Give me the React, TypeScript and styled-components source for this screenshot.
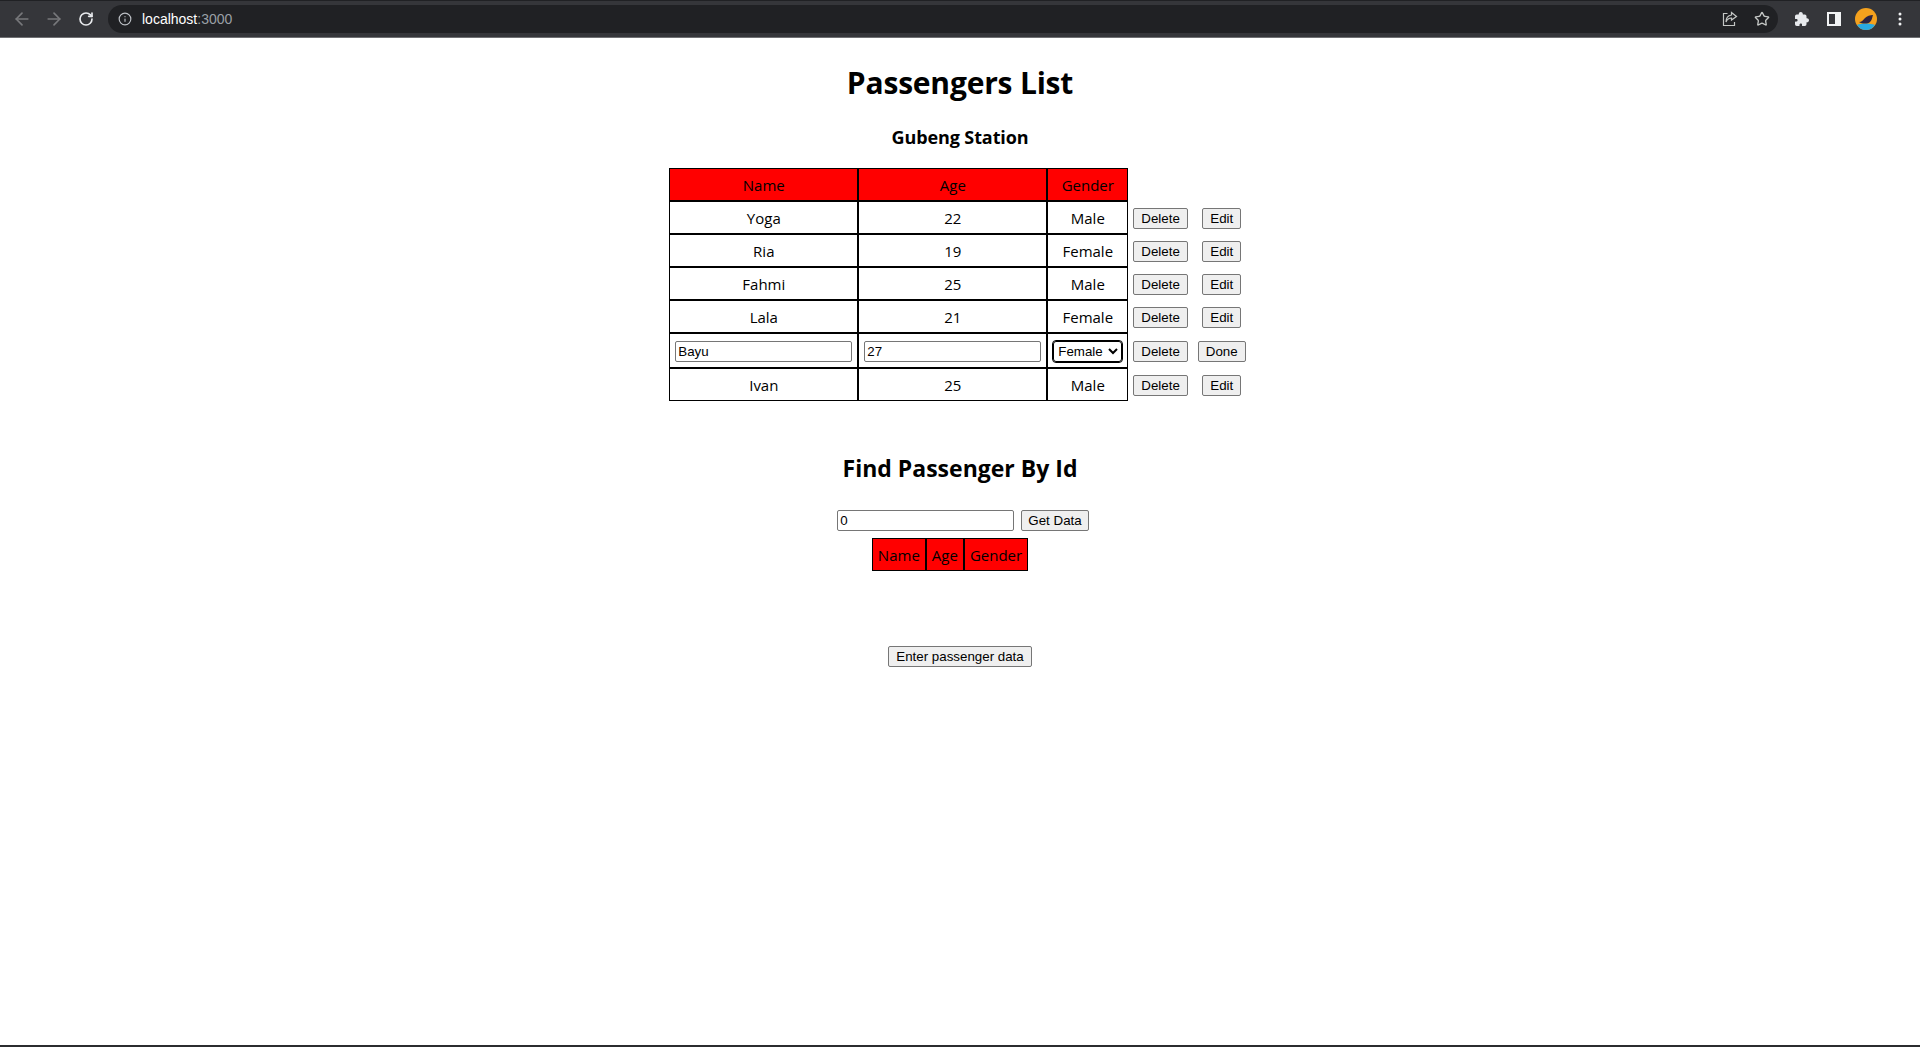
import styled, { createGlobalStyle } from "styled-components";
import { ArrowLeft, ArrowRight, RotateCw, Info, Star } from "lucide-react";
import { IoExtensionPuzzle } from "react-icons/io5";

const GlobalStyle = createGlobalStyle`
    html, body {
        margin: 0;
        padding: 0;
        background-color: #fff;
    }
    body {
        font-family: "Open Sans", "Noto Sans", sans-serif;
        color: #000;
    }
`

const Page = styled.div`
    display: flex;
    flex-direction: column;
    height: 100vh;
    overflow: hidden;
`

const Toolbar = styled.header`
    flex: 0 0 38px;
    box-sizing: border-box;
    display: flex;
    align-items: center;
    padding: 0 4px 0 6px;
    background-color: #35363a;
    border-top: 1px solid #202124;
    border-bottom: 1px solid #6f7073;
`

const NavButton = styled.span<{ $dim?: boolean }>`
    display: flex;
    align-items: center;
    justify-content: center;
    width: 32px;
    height: 28px;
    color: ${(p) => (p.$dim ? "#77787b" : "#e8eaed")};
`

const Omnibox = styled.div`
    flex: 1;
    height: 28px;
    margin: 0 8px 0 6px;
    padding: 0 8px 0 10px;
    display: flex;
    align-items: center;
    border-radius: 14px;
    background-color: #202124;
    color: #bdc1c6;
`

const Url = styled.span`
    flex: 1;
    margin-left: 10px;
    font: 14px "Liberation Sans", Arial, sans-serif;
    color: #fff;
    span {
        color: #9aa0a6;
    }
`

const OmniIcon = styled.span`
    display: flex;
    margin-left: 16px;
    color: #c4c7c5;
`

const Avatar = styled.svg`
    margin: 0 7px 0 5px;
`

const Main = styled.main`
    flex: 1;
    text-align: center;
    min-height: 0;
`

const Title = styled.h1`
    margin: 23px 0 0;
    font-size: 30px;
    line-height: 43px;
    font-weight: 700;
    letter-spacing: -0.2px;
`

const Station = styled.h3`
    margin: 21px 0 18px;
    font-size: 18px;
    line-height: 25px;
    font-weight: 700;
    letter-spacing: -0.1px;
`

const Table = styled.table`
    margin: 0 auto;
    border-spacing: 0;
    border-collapse: separate;
    font-size: 15px;
`

const HeadCell = styled.th`
    padding: 6px 5px 4px;
    height: 21px;
    line-height: 21px;
    font-weight: 400;
    background-color: #f00;
    border: 1px solid #000;
`

const Cell = styled.td<{ $editing?: boolean }>`
    padding: ${(p) => (p.$editing ? "6px 5px 5px" : "6px 5px 4px")};
    line-height: 21px;
    border: 1px solid #000;
`

const ActionCell = styled.td`
    padding: 5px;
    line-height: 21px;
`

const TextInput = styled.input`
    box-sizing: border-box;
    display: inline-block;
    width: 177px;
    height: 21px;
    padding: 1px 2px;
    margin: 0;
    font: 13.33px "Liberation Sans", Arial, sans-serif;
    color: #000;
    background-color: #fff;
    border: 1px solid #767676;
    border-radius: 2px;
    vertical-align: middle;
`

const GenderSelect = styled.select`
    box-sizing: border-box;
    display: block;
    width: 69px;
    height: 21px;
    margin: 0 auto;
    font: 13.33px "Liberation Sans", Arial, sans-serif;
    color: #000;
    background-color: #fff;
    border: 1px solid #000;
    border-radius: 3px;
    outline: 1px solid #000;
`

const Button = styled.button`
    box-sizing: border-box;
    height: 21px;
    padding: 1px 7px;
    margin: 0;
    font: 13.33px "Liberation Sans", Arial, sans-serif;
    color: #000;
    background-color: #efefef;
    border: 1px solid #767676;
    border-radius: 2px;
    vertical-align: middle;
`

const GetDataButton = styled(Button)`
    padding: 1px 6px;
`

const FindTitle = styled.h2`
    margin: 51px 0 26px;
    font-size: 23px;
    line-height: 32px;
    font-weight: 700;
`

const FindRow = styled.div`
    display: flex;
    justify-content: center;
    gap: 7px;
    height: 21px;
    margin-bottom: 7px;
    padding-left: 6px;
`

const EnterRow = styled.div`
    margin-top: 72px;
`

const BottomLine = styled.div`
    flex: 0 0 2px;
    background-color: #2b2c2f;
`

const passengers = [
    { name: "Yoga", age: 22, gender: "Male" },
    { name: "Ria", age: 19, gender: "Female" },
    { name: "Fahmi", age: 25, gender: "Male" },
    { name: "Lala", age: 21, gender: "Female" },
    { name: "Bayu", age: 27, gender: "Female", editing: true },
    { name: "Ivan", age: 25, gender: "Male" },
];

const ShareIcon = () => (
    <svg width="16" height="16" viewBox="0 0 16 16" fill="none" stroke="currentColor" strokeWidth="1.2">
        <path d="M5.5 2.5H1.5v12h11V11" />
        <path d="M9.5 1.5 14.5 5.5 9.5 9V7C7 7 5 8.5 4 11c0-4 2-6.5 5.5-7z" />
    </svg>
);

const SidePanelIcon = () => (
    <svg width="14" height="14" viewBox="0 0 14 14">
        <path fillRule="evenodd" fill="#f1f3f4" d="M0 0h14v14H0zM2 2v10h6V2z" />
    </svg>
);

const MoreIcon = () => (
    <svg width="4" height="14" viewBox="0 0 4 14" fill="#f1f3f4">
        <circle cx="2" cy="2" r="1.5" />
        <circle cx="2" cy="7" r="1.5" />
        <circle cx="2" cy="12" r="1.5" />
    </svg>
);

const App = () => {
    return (
        <Page>
            <GlobalStyle />
            <Toolbar>
                <NavButton $dim><ArrowLeft size={20} /></NavButton>
                <NavButton $dim><ArrowRight size={20} /></NavButton>
                <NavButton><RotateCw size={16} strokeWidth={2.5} /></NavButton>
                <Omnibox>
                    <Info size={14} />
                    <Url>localhost<span>:3000</span></Url>
                    <OmniIcon><ShareIcon /></OmniIcon>
                    <OmniIcon><Star size={16} /></OmniIcon>
                </Omnibox>
                <NavButton><IoExtensionPuzzle size={16} /></NavButton>
                <NavButton><SidePanelIcon /></NavButton>
                <Avatar width="22" height="22" viewBox="0 0 22 22">
                    <circle cx="11" cy="11" r="11" fill="#f4a11d" />
                    <path d="M2 17c4-2 13-2 18 0-2 3-5 5-9 5s-7-2-9-5z" fill="#29a9e0" />
                    <path d="M4 14c3 0 4-2 6-4 2-2 5-3 8-3-1 3-1 5-3 7-2 2-8 2-11 0z" fill="#2c2340" />
                </Avatar>
                <NavButton><MoreIcon /></NavButton>
            </Toolbar>
            <Main>
                <Title>Passengers List</Title>
                <Station>Gubeng Station</Station>
                <Table>
                    <thead>
                        <tr>
                            <HeadCell>Name</HeadCell>
                            <HeadCell>Age</HeadCell>
                            <HeadCell>Gender</HeadCell>
                        </tr>
                    </thead>
                    <tbody>
                        {passengers.map((p) => (
                            <tr key={p.name}>
                                {p.editing ? (
                                    <>
                                        <Cell $editing><TextInput defaultValue={p.name} /></Cell>
                                        <Cell $editing><TextInput defaultValue={p.age} /></Cell>
                                        <Cell $editing>
                                            <GenderSelect defaultValue={p.gender}>
                                                <option>Male</option>
                                                <option>Female</option>
                                            </GenderSelect>
                                        </Cell>
                                    </>
                                ) : (
                                    <>
                                        <Cell>{p.name}</Cell>
                                        <Cell>{p.age}</Cell>
                                        <Cell>{p.gender}</Cell>
                                    </>
                                )}
                                <ActionCell><Button>Delete</Button></ActionCell>
                                <ActionCell><Button>{p.editing ? "Done" : "Edit"}</Button></ActionCell>
                            </tr>
                        ))}
                    </tbody>
                </Table>
                <FindTitle>Find Passenger By Id</FindTitle>
                <FindRow>
                    <TextInput defaultValue="0" />
                    <GetDataButton>Get Data</GetDataButton>
                </FindRow>
                <Table>
                    <thead>
                        <tr>
                            <HeadCell>Name</HeadCell>
                            <HeadCell>Age</HeadCell>
                            <HeadCell>Gender</HeadCell>
                            <ActionCell />
                            <ActionCell />
                        </tr>
                    </thead>
                </Table>
                <EnterRow>
                    <Button>Enter passenger data</Button>
                </EnterRow>
            </Main>
            <BottomLine />
        </Page>
    );
}

export default App;
